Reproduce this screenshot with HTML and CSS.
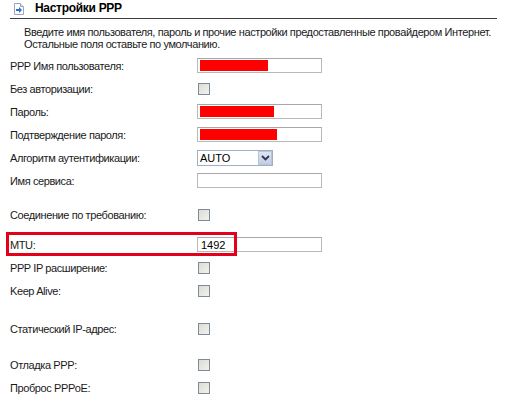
FILE: index.html
```html
<!DOCTYPE html>
<html lang="ru">
<head>
<meta charset="utf-8">
<title>Настройки PPP</title>
<link rel="stylesheet" href="styles.css">
</head>
<body>
<div class="page">
  <div class="header">
    <svg class="icon" width="10" height="12" viewBox="0 0 10 12">
      <path d="M0.5 0.5 H6.5 L9.5 3.5 V11.5 H0.5 Z" fill="#ffffff" stroke="#9aa6b4"/>
      <path d="M6.5 0.5 V3.5 H9.5" fill="#e6ebf0" stroke="#9aa6b4"/>
      <path d="M2 6 H5 V4 L8 7 L5 10 V8 H2 Z" fill="#2a6fd6"/>
    </svg>
    <span class="title">Настройки PPP</span>
  </div>
  <div class="desc">Введите имя пользователя, пароль и прочие настройки предоставленные провайдером Интернет.<br>Остальные поля оставьте по умолчанию.</div>
  <div class="form">
    <div class="row"><span class="label">PPP Имя пользователя:</span><div class="field"><span class="mask" style="width:68px"></span></div></div>
    <div class="row"><span class="label">Без авторизации:</span><span class="check"></span></div>
    <div class="row"><span class="label">Пароль:</span><div class="field"><span class="mask" style="width:74px"></span></div></div>
    <div class="row"><span class="label">Подтверждение пароля:</span><div class="field"><span class="mask" style="width:77px"></span></div></div>
    <div class="row"><span class="label">Алгоритм аутентификации:</span>
      <div class="select"><span class="select-text">AUTO</span><span class="select-btn"><svg width="9" height="6" viewBox="0 0 9 6"><path d="M1 1 L4.5 4.5 L8 1" fill="none" stroke="#2b3a52" stroke-width="1.8"/></svg></span></div>
    </div>
    <div class="row"><span class="label">Имя сервиса:</span><div class="field"></div></div>
    <div class="row gap-m"><span class="label">Соединение по требованию:</span><span class="check"></span></div>
    <div class="row gap-s mtu"><span class="label">MTU:</span><div class="field"><span class="value">1492</span></div><span class="highlight"></span></div>
    <div class="row"><span class="label">PPP IP расширение:</span><span class="check"></span></div>
    <div class="row"><span class="label">Keep Alive:</span><span class="check"></span></div>
    <div class="row gap-xl"><span class="label">Статический IP-адрес:</span><span class="check"></span></div>
    <div class="row gap-l"><span class="label">Отладка PPP:</span><span class="check"></span></div>
    <div class="row"><span class="label">Проброс PPPoE:</span><span class="check"></span></div>
  </div>
</div>
</body>
</html>
```
FILE: styles.css
```css
html, body {
  margin: 0;
  padding: 0;
  background: #ffffff;
}
.page {
  width: 506px;
  height: 400px;
  overflow: hidden;
  font-family: "Liberation Sans", Arial, sans-serif;
  font-size: 11px;
  letter-spacing: -0.4px;
  color: #1a1a1a;
}
.header {
  display: flex;
  align-items: center;
  height: 18px;
  margin: 0 9px 0 10px;
  padding-left: 4px;
  border-bottom: 1px solid #3c3c3c;
  gap: 11px;
}
.icon {
  display: block;
  margin-top: -1px;
}
.title {
  font-weight: bold;
  font-size: 12px;
  letter-spacing: -0.3px;
  color: #000;
  margin-top: -3px;
}
.desc {
  margin-top: 7px;
  padding-left: 24px;
  line-height: 12px;
}
.form {
  margin-top: 4px;
  display: flex;
  flex-direction: column;
}
.row {
  position: relative;
  display: flex;
  align-items: center;
  height: 23px;
  padding-left: 10px;
}
.gap-s { margin-top: 7px; }
.gap-m { margin-top: 11px; }
.gap-l { margin-top: 13px; }
.gap-xl { margin-top: 15px; }
.label {
  width: 187px;
  flex: none;
}
.field {
  box-sizing: border-box;
  width: 125px;
  height: 15px;
  border: 1px solid #b9b9b9;
  border-top-color: #a8a8a8;
  background: #fff;
  padding: 1px 0 1px 2px;
  display: flex;
  align-items: stretch;
}
.mask {
  display: block;
  background: #ff0000;
}
.value {
  line-height: 13px;
  color: #000;
  letter-spacing: 0;
  margin-left: 1px;
}
.check {
  box-sizing: border-box;
  width: 12px;
  height: 12px;
  margin-left: 1px;
  border: 1px solid #7e8a99;
  background: linear-gradient(135deg, #dcdcd6 0%, #f2f2ee 100%);
}
.select {
  box-sizing: border-box;
  width: 76px;
  height: 16px;
  border: 1px solid #9fb0c6;
  background: #fff;
  display: flex;
  align-items: center;
  justify-content: space-between;
}
.select-text {
  padding-left: 2px;
  color: #000;
  letter-spacing: 0;
}
.select-btn {
  box-sizing: border-box;
  width: 14px;
  height: 14px;
  border: 1px solid #b7c4dc;
  background: linear-gradient(#dfe4f2, #c5cde3);
  display: flex;
  align-items: center;
  justify-content: center;
}
.select-btn svg {
  display: block;
}
.highlight {
  position: absolute;
  left: 6px;
  top: -1px;
  width: 231px;
  height: 24px;
  box-sizing: border-box;
  border: 3px solid #e3001b;
}
```
